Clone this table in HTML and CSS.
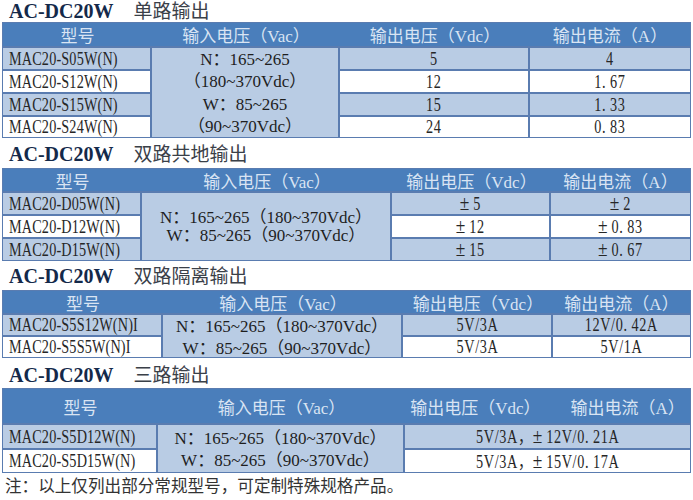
FILE: index.html
```html
<!DOCTYPE html>
<html lang="zh">
<head>
<meta charset="utf-8">
<title>AC-DC20W</title>
<link rel="stylesheet" href="styles.css">
</head>
<body>
<div class="page">
  <div class="title s1"><span class="code">AC-DC20W</span><span class="cn">单路输出</span></div>
  <div class="tbl tb1">
    <div class="h">型号</div>
    <div class="h">输入电压（Vac）</div>
    <div class="h">输出电压（Vdc）</div>
    <div class="h">输出电流（A）</div>

    <div class="c model lt"><span class="sx">MAC20-S05W(N)</span></div>
    <div class="c vin v1 lt span4">
      <div>N：165~265</div>
      <div>（180~370Vdc）</div>
      <div>W：85~265</div>
      <div>（90~370Vdc）</div>
    </div>
    <div class="c lt"><span class="sx">5</span></div>
    <div class="c lt end"><span class="sx">4</span></div>

    <div class="c model wt"><span class="sx">MAC20-S12W(N)</span></div>
    <div class="c wt"><span class="sx">12</span></div>
    <div class="c wt end"><span class="sx">1<span class="dt">.</span>67</span></div>

    <div class="c model lt"><span class="sx">MAC20-S15W(N)</span></div>
    <div class="c lt"><span class="sx">15</span></div>
    <div class="c lt end"><span class="sx">1<span class="dt">.</span>33</span></div>

    <div class="c model wt"><span class="sx">MAC20-S24W(N)</span></div>
    <div class="c wt"><span class="sx">24</span></div>
    <div class="c wt end"><span class="sx">0<span class="dt">.</span>83</span></div>
  </div>

  <div class="title s2"><span class="code">AC-DC20W</span><span class="cn">双路共地输出</span></div>
  <div class="tbl tb2">
    <div class="h">型号</div>
    <div class="h">输入电压（Vac）</div>
    <div class="h">输出电压（Vdc）</div>
    <div class="h">输出电流（A）</div>

    <div class="c model lt"><span class="sx">MAC20-D05W(N)</span></div>
    <div class="c vin v2 lt span3">
      <div>N：165~265（180~370Vdc）</div>
      <div>W：85~265（90~370Vdc）</div>
    </div>
    <div class="c lt"><span class="sx"><span class="pm">±</span>5</span></div>
    <div class="c lt end"><span class="sx"><span class="pm">±</span>2</span></div>

    <div class="c model wt"><span class="sx">MAC20-D12W(N)</span></div>
    <div class="c wt"><span class="sx"><span class="pm">±</span>12</span></div>
    <div class="c wt end"><span class="sx"><span class="pm">±</span>0<span class="dt">.</span>83</span></div>

    <div class="c model lt"><span class="sx">MAC20-D15W(N)</span></div>
    <div class="c lt"><span class="sx"><span class="pm">±</span>15</span></div>
    <div class="c lt end"><span class="sx"><span class="pm">±</span>0<span class="dt">.</span>67</span></div>
  </div>

  <div class="title s3"><span class="code">AC-DC20W</span><span class="cn">双路隔离输出</span></div>
  <div class="tbl tb3">
    <div class="h">型号</div>
    <div class="h">输入电压（Vac）</div>
    <div class="h">输出电压（Vdc）</div>
    <div class="h">输出电流（A）</div>

    <div class="c model lt"><span class="sx">MAC20-S5S12W(N)I</span></div>
    <div class="c vin v3 lt span2">
      <div>N：165~265（180~370Vdc）</div>
      <div>W：85~265（90~370Vdc）</div>
    </div>
    <div class="c lt"><span class="sx">5V/3A</span></div>
    <div class="c lt end"><span class="sx">12V/0<span class="dt">.</span>42A</span></div>

    <div class="c model wt"><span class="sx">MAC20-S5S5W(N)I</span></div>
    <div class="c wt"><span class="sx">5V/3A</span></div>
    <div class="c wt end"><span class="sx">5V/1A</span></div>
  </div>

  <div class="title s4"><span class="code">AC-DC20W</span><span class="cn">三路输出</span></div>
  <div class="tbl tb4">
    <div class="h">型号</div>
    <div class="h">输入电压（Vac）</div>
    <div class="h pair"><span>输出电压（Vdc）</span><span>输出电流（A）</span></div>

    <div class="c model lt"><span class="sx">MAC20-S5D12W(N)</span></div>
    <div class="c vin v4 lt span2">
      <div>N：165~265（180~370Vdc）</div>
      <div>W：85~265（90~370Vdc）</div>
    </div>
    <div class="c lt end"><span class="sx">5V/3A，<span class="pm">±</span>12V/0<span class="dt">.</span>21A</span></div>

    <div class="c model wt"><span class="sx">MAC20-S5D15W(N)</span></div>
    <div class="c wt end"><span class="sx">5V/3A，<span class="pm">±</span>15V/0<span class="dt">.</span>17A</span></div>
  </div>

  <div class="note">注：以上仅列出部分常规型号，可定制特殊规格产品。</div>
</div>
</body>
</html>
```

FILE: styles.css
```css
* {
  box-sizing: border-box;
  margin: 0;
  padding: 0;
}

body {
  margin: 0;
  background: #ffffff;
  width: 693px;
  height: 500px;
  overflow: hidden;
  font-family: "Liberation Serif", "Noto Sans CJK SC", serif;
  color: #222222;
}

.page {
  padding-left: 2px;
  width: 691px;
}

/* section titles */
.title {
  height: 22px;
  line-height: 22px;
  padding-left: 7px;
  white-space: nowrap;
}
.title.s2 { height: 30px; padding-top: 5px; }
.title.s3 { height: 29px; padding-top: 4px; }
.title.s4 { height: 30px; padding-top: 6px; }

.code {
  font-family: "Liberation Serif", serif;
  font-weight: bold;
  font-size: 20px;
  color: #14294a;
}

.cn {
  font-family: "Liberation Serif", "Noto Sans CJK SC", sans-serif;
  font-size: 19px;
  color: #3a4048;
  margin-left: 20px;
}

/* tables */
.tbl {
  display: grid;
  border: 1px solid #5a7cb0;
}

.tb1 {
  grid-template-columns: 149px 188px 190px 160px;
  grid-template-rows: 23px 23px 23px 23px 22px;
}
.tb2 {
  grid-template-columns: 139px 250px 159px 139px;
  grid-template-rows: 22px 23px 23px 23px;
}
.tb3 {
  grid-template-columns: 160px 240px 150px 137px;
  grid-template-rows: 22px 22px 22px;
}
.tb4 {
  grid-template-columns: 155px 247px 285px;
  grid-template-rows: 34px 25px 24px;
}

.h {
  background: #4a7ebb;
  color: #d9e4f3;
  font-size: 17px;
  display: flex;
  align-items: center;
  justify-content: center;
  white-space: nowrap;
}
.h.pair {
  gap: 30px;
}

.c {
  border-top: 2px solid #5a7cb0;
  border-right: 2px solid #5a7cb0;
  display: flex;
  align-items: center;
  justify-content: center;
  white-space: nowrap;
}
.c.end { border-right: none; }

.lt { background: #b9cce4; }
.wt { background: #ffffff; }

.span4 { grid-row: span 4; }
.span3 { grid-row: span 3; }
.span2 { grid-row: span 2; }

.model {
  justify-content: flex-start;
  padding-left: 6px;
}

.sx {
  display: inline-block;
  font-family: "Liberation Serif", "Noto Sans CJK SC", serif;
  font-size: 18px;
  line-height: 20px;
  letter-spacing: 0.8px;
  color: #262626;
  transform: scaleX(0.79);
}
.model .sx {
  letter-spacing: 0.2px;
  transform-origin: left center;
}

.dt {
  margin-right: 5px;
}

.pm {
  display: inline-block;
  width: 17px;
  text-align: left;
  font-size: 22px;
  line-height: 20px;
}

.vin {
  flex-direction: column;
  font-size: 17px;
  color: #1e1e1e;
}
.v1 { line-height: 22.5px; padding-top: 2px; }
.v2 { line-height: 18px; }
.v3 { line-height: 22px; padding-top: 3px; }
.v4 { line-height: 22px; padding-top: 3px; }

.note {
  font-family: "Noto Sans CJK SC", sans-serif;
  font-size: 16.6px;
  line-height: 20px;
  color: #333333;
  padding: 2px 0 0 3px;
  white-space: nowrap;
}
```
